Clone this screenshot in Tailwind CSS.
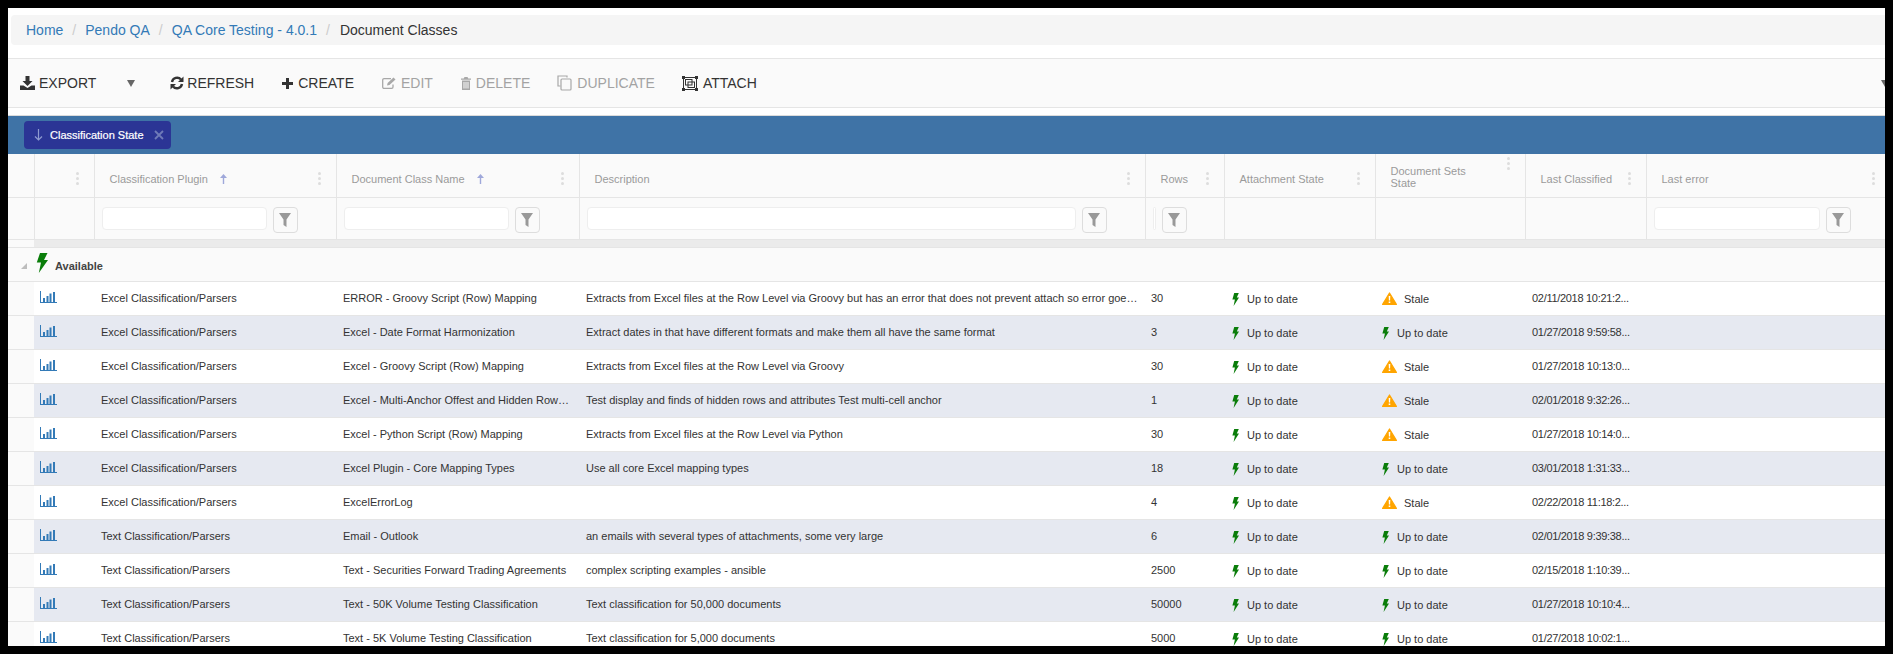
<!DOCTYPE html>
<html lang="en">

<head>
    <meta charset="UTF-8">
    <title>Document Classes</title>
    <script src="https://cdn.jsdelivr.net/npm/@tailwindcss/browser@4"></script>
</head>

<body class="bg-black h-[654px] overflow-hidden p-2 [font-family:'Liberation_Sans',Arial,sans-serif] text-[#333]">
    <div class="bg-white h-[638px] overflow-hidden flex flex-col">

        <!-- breadcrumb -->
        <div class="pt-[7px] pl-[3px]">
            <div class="bg-[#f5f5f5] h-[30px] flex items-center pl-[15px] text-[14px] rounded-l-sm">
                <a class="text-[#337ab7]">Home</a>
                <span class="mx-[9px] text-[#ccc]">/</span>
                <a class="text-[#337ab7]">Pendo QA</a>
                <span class="mx-[9px] text-[#ccc]">/</span>
                <a class="text-[#337ab7]">QA Core Testing - 4.0.1</a>
                <span class="ml-[9px] mr-[10px] text-[#ccc]">/</span>
                <span class="text-[#333]">Document Classes</span>
            </div>
        </div>

        <!-- toolbar -->
        <div class="mt-[13px] h-[50px] shrink-0 bg-[#fafafa] border-y border-[#e5e5e5] flex items-center pl-[12px] pr-0 text-[14px]">
            <button class="flex items-center gap-[4px] text-[#333]">
                <svg class="w-[15px] h-[14px]" viewBox="0 0 15 14" fill="#333"><path d="M5.500 0h4v5h3L7.500 10 2.500 5h3zM0 9.500h3.500L7.500 12l4-2.500H15V14H0z"/></svg>
                EXPORT
            </button>
            <svg class="ml-[31px] w-[8px] h-[7px]" viewBox="0 0 8 7" fill="#666"><path d="M0 0h8L4 7z"/></svg>
            <button class="ml-[35px] flex items-center gap-[3px] text-[#333]">
                <svg class="w-[14px] h-[14px]" viewBox="0 0 14 14" fill="none" stroke="#333" stroke-width="2.400"><path d="M2 6a5.200 5.200 0 0 1 9-2.500M12 8a5.200 5.200 0 0 1-9 2.500"/><path d="M13.500 0.500v5.500H8z" fill="#333" stroke="none"/><path d="M0.500 13.500V8H6z" fill="#333" stroke="none"/></svg>
                REFRESH
            </button>
            <button class="ml-[28px] flex items-center gap-[5px] text-[#333]">
                <svg class="w-[11px] h-[11px]" viewBox="0 0 11 11" fill="#333"><path d="M4 0h3v4h4v3H7v4H4V7H0V4h4z"/></svg>
                CREATE
            </button>
            <button class="ml-[28px] flex items-center gap-[5px] text-[#a3a3a3]">
                <svg class="w-[14px] h-[12px]" viewBox="0 0 14 12" fill="none" stroke="#a8a8a8" stroke-width="1.300"><path d="M11 7.500V10a1.300 1.300 0 0 1-1.300 1.300H2A1.300 1.300 0 0 1 .7 10V3A1.300 1.300 0 0 1 2 1.700h7"/><path d="M5 8.500l.6-2.500L11.500.5l2 2L7.500 8z" fill="#a8a8a8" stroke="none"/></svg>
                EDIT
            </button>
            <button class="ml-[28px] flex items-center gap-[5px] text-[#a3a3a3]">
                <svg class="w-[10px] h-[13px]" viewBox="0 0 10 13" fill="#a8a8a8"><path d="M3.500 0h3l.8 1.500H10v1.300H0V1.500h2.700zM1 3.500h8V13H1zm1.500 1.500v6.500h1V5zm2 0v6.500h1V5zm2 0v6.500h1V5z" fill-rule="evenodd"/></svg>
                DELETE
            </button>
            <button class="ml-[27px] flex items-center gap-[5px] text-[#a3a3a3]">
                <svg class="w-[15px] h-[16px]" viewBox="0 0 15 16" fill="none" stroke="#a8a8a8" stroke-width="1.200"><path d="M10 2.500V1H1v10h2.500"/><rect x="4" y="4" width="10" height="11" rx="1"/></svg>
                DUPLICATE
            </button>
            <button class="ml-[27px] flex items-center gap-[5px] text-[#333]">
                <svg class="w-[16px] h-[15px]" viewBox="0 0 16 15" fill="none" stroke="#333"><rect x="1.500" y="1.500" width="13" height="12"/><rect x="3.500" y="3.500" width="6.500" height="5.500"/><rect x="6" y="6" width="6.500" height="5.500"/><path d="M0 0h3v3H0zM13 0h3v3h-3zM0 12h3v3H0zM13 12h3v3h-3z" fill="#333" stroke="none"/></svg>
                ATTACH
            </button>
            <svg class="ml-auto w-[8px] h-[7px] translate-x-[4px]" viewBox="0 0 8 7" fill="#666"><path d="M0 0h8L4 7z"/></svg>
        </div>

        <!-- group by bar -->
        <div class="mt-[7px] h-[39px] shrink-0 bg-[#3f73a6] border-t border-[#dcdcdc] flex items-center pl-[16px]">
            <div class="w-[147px] h-[28px] bg-[#2b3595] rounded-sm flex items-center pl-[10px] pr-[7px] text-[11px] text-white">
                <svg class="w-[9px] h-[12px]" viewBox="0 0 9 12" fill="none" stroke="#8f9bd0" stroke-width="1.200"><path d="M4.500 0v11M1 7.500l3.500 3.500L8 7.500"/></svg>
                <span class="ml-[7px] [-webkit-text-stroke:0.2px_white]">Classification State</span>
                <svg class="ml-auto w-[10px] h-[10px]" viewBox="0 0 10 10" stroke="#6f7bb8" stroke-width="1.800"><path d="M1 1l8 8M9 1l-8 8"/></svg>
            </div>
        </div>

        <!-- grid -->
        <table class="table-fixed w-[1877px] text-[11px]">
            <colgroup>
                <col class="w-[26px]"><col class="w-[60px]"><col class="w-[242px]"><col class="w-[243px]"><col class="w-[566px]">
                <col class="w-[79px]"><col class="w-[151px]"><col class="w-[150px]"><col class="w-[121px]"><col class="w-[239px]">
            </colgroup>
            <thead class="bg-[#fafafa] text-[#9a9a9a] font-normal">
                <tr id="head" class="h-[43px] border-b border-[#e5e5e5]"></tr>
                <tr id="filters" class="h-[42px] border-b border-[#e5e5e5]"></tr>
                <tr class="h-[8px]">
                    <td class="bg-[#fafafa]"></td>
                    <td colspan="9" class="bg-[#ebebeb]"></td>
                </tr>
            </thead>
            <tbody id="rows">
                <tr class="h-[34px] bg-[#fafafa] border-y border-[#e5e5e5]">
                    <td colspan="10">
                        <div class="flex items-center">
                            <svg class="ml-[13px] w-[6px] h-[6px] mt-[3px]" viewBox="0 0 6 6" fill="#bdbdbd"><path d="M6 0v6H0z"/></svg>
                            <svg class="ml-[9px] w-[12px] h-[20px] -mt-[2px]" viewBox="0 0 12 20" fill="#0a7d0a"><path d="M4 0h7.500L8 7h4L2.800 20l2.200-10.500H.8z"/></svg>
                            <span class="ml-[7px] mt-[4px] font-bold text-[#444]">Available</span>
                        </div>
                    </td>
                </tr>
            </tbody>
        </table>
    </div>

    <script>
        const bolt = `<svg class="w-[7px] h-[13px] shrink-0" viewBox="0 0 7 13" fill="#0a7d0a"><path d="M2.200 0h4.600L4.800 4.600H7L1.600 13l1.300-6.500H.4z"/></svg>`;
        const warn = `<svg class="w-[15px] h-[13px] shrink-0 -mt-[2px]" viewBox="0 0 15 13"><path d="M7.500 1L14.400 12.400H.6z" fill="#ffa500" stroke="#ffa500" stroke-width="1.200" stroke-linejoin="round"/><path d="M6.700 4h1.600l-.2 4.500H6.900zM6.700 9.500h1.600V11H6.700z" fill="#fff"/></svg>`;
        const chart = `<svg class="w-[17px] h-[12px]" viewBox="0 0 17 12" fill="#337ab7"><path d="M0 0h1v11h16v1H0z"/><path d="M3 7h2v4H3zM6.500 5h2v6h-2zM9.500 2.500h2V11h-2zM13 1h2v10h-2z"/></svg>`;
        const funnel = `<svg class="w-[12px] h-[14px]" viewBox="0 0 12 14" fill="#999"><path d="M0 0h12L7.500 6.500V14l-3-2V6.500z"/></svg>`;
        const dots = `<span class="flex flex-col gap-[2px] shrink-0"><i class="block w-[3px] h-[3px] rounded-full bg-[#ddd]"></i><i class="block w-[3px] h-[3px] rounded-full bg-[#ddd]"></i><i class="block w-[3px] h-[3px] rounded-full bg-[#ddd]"></i></span>`;
        const sortUp = `<svg class="ml-[12px] w-[7px] h-[10px] shrink-0" viewBox="0 0 7 10" fill="#9fa8da"><path d="M3.500 0L7 4H4.200v6H2.800V4H0z"/></svg>`;

        const columns = [
            { title: '' },
            { title: '', menu: true },
            { title: 'Classification Plugin', sort: true, menu: true, filter: 165 },
            { title: 'Document Class Name', sort: true, menu: true, filter: 165 },
            { title: 'Description', menu: true, filter: 489 },
            { title: 'Rows', menu: true, filter: 3 },
            { title: 'Attachment State', menu: true },
            { title: 'Document Sets<br>State', menu: true, top: true },
            { title: 'Last Classified', menu: true },
            { title: 'Last error', menu: true, filter: 166, last: true }
        ];

        document.getElementById('head').innerHTML = columns.map(c => `
            <th class="font-normal text-left border-r border-[#e5e5e5] last:border-r-0">
                <div class="flex ${c.top ? 'items-start pt-[3px]' : 'items-center pt-[7px]'} justify-between h-[42px] pl-[15px] ${c.last ? 'pr-[10px]' : 'pr-[15px]'}">
                    <span class="flex items-center leading-[12px] ${c.top ? 'self-center pt-[1px]' : ''}">${c.title}${c.sort ? sortUp : ''}</span>
                    ${c.menu ? dots : ''}
                </div>
            </th>`).join('');

        document.getElementById('filters').innerHTML = columns.map(c => `
            <td class="border-r border-[#e5e5e5] last:border-r-0">
                ${c.filter ? `<div class="flex items-start pl-[7px] pt-[3px] gap-[6px]">
                    <input class="h-[23px] bg-white border border-[#eee] rounded-sm" style="width:${c.filter}px">
                    <span class="w-[25px] h-[26px] flex items-center justify-center bg-[#fafafa] border border-[#ddd] rounded-sm">${funnel}</span>
                </div>` : ''}
            </td>`).join('');

        const data = [
            ['Excel Classification/Parsers', 'ERROR - Groovy Script (Row) Mapping', 'Extracts from Excel files at the Row Level via Groovy but has an error that does not prevent attach so error goes to the log', '30', 'Stale', '02/11/2018 10:21:2...'],
            ['Excel Classification/Parsers', 'Excel - Date Format Harmonization', 'Extract dates in that have different formats and make them all have the same format', '3', 'Up to date', '01/27/2018 9:59:58...'],
            ['Excel Classification/Parsers', 'Excel - Groovy Script (Row) Mapping', 'Extracts from Excel files at the Row Level via Groovy', '30', 'Stale', '01/27/2018 10:13:0...'],
            ['Excel Classification/Parsers', 'Excel - Multi-Anchor Offest and Hidden Rows Test', 'Test display and finds of hidden rows and attributes Test multi-cell anchor', '1', 'Stale', '02/01/2018 9:32:26...'],
            ['Excel Classification/Parsers', 'Excel - Python Script (Row) Mapping', 'Extracts from Excel files at the Row Level via Python', '30', 'Stale', '01/27/2018 10:14:0...'],
            ['Excel Classification/Parsers', 'Excel Plugin - Core Mapping Types', 'Use all core Excel mapping types', '18', 'Up to date', '03/01/2018 1:31:33...'],
            ['Excel Classification/Parsers', 'ExcelErrorLog', '', '4', 'Stale', '02/22/2018 11:18:2...'],
            ['Text Classification/Parsers', 'Email - Outlook', 'an emails with several types of attachments, some very large', '6', 'Up to date', '02/01/2018 9:39:38...'],
            ['Text Classification/Parsers', 'Text - Securities Forward Trading Agreements', 'complex scripting examples - ansible', '2500', 'Up to date', '02/15/2018 1:10:39...'],
            ['Text Classification/Parsers', 'Text - 50K Volume Testing Classification', 'Text classification for 50,000 documents', '50000', 'Up to date', '01/27/2018 10:10:4...'],
            ['Text Classification/Parsers', 'Text - 5K Volume Testing Classification', 'Text classification for 5,000 documents', '5000', 'Up to date', '01/27/2018 10:02:1...']
        ];

        const upToDate = `<div class="flex items-center gap-[8px] pt-[2px]">${bolt}<span>Up to date</span></div>`;
        const stale = `<div class="flex items-center gap-[7px] pt-[2px]">${warn}<span>Stale</span></div>`;

        document.getElementById('rows').insertAdjacentHTML('beforeend', data.map((r, i) => `
            <tr class="h-[34px] border-b border-[#e5e5e5] ${i % 2 ? 'bg-[#e6e9f1]' : 'bg-white'}">
                <td class="bg-[#fafafa]"></td>
                <td class="pl-[6px] align-top pt-[9px]">${chart}</td>
                <td class="pl-[7px] pr-[9px] truncate">${r[0]}</td>
                <td class="pl-[7px] pr-[9px] truncate">${r[1]}</td>
                <td class="pl-[7px] pr-[5px] truncate">${r[2]}</td>
                <td class="pl-[6px] truncate">${r[3]}</td>
                <td class="pl-[8px]">${upToDate}</td>
                <td class="pl-[7px]">${r[4] === 'Stale' ? stale : upToDate}</td>
                <td class="pl-[7px] whitespace-nowrap tracking-[-0.3px]">${r[5]}</td>
                <td></td>
            </tr>`).join(''));
    </script>
</body>

</html>
